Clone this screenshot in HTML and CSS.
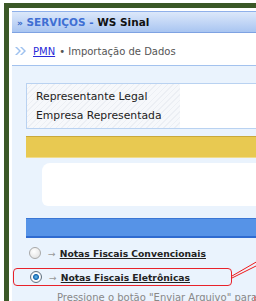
FILE: index.html
```html
<!DOCTYPE html>
<html lang="pt">
<head>
	<meta charset="UTF-8">
	<title>Serviços - WS Sinal</title>
	<link rel="stylesheet" href="styles.css">
</head>
<body>
	<div class="frame">
		<div class="title"><span class="raquo">&raquo;</span> <span class="blue">SERVIÇOS -</span> WS Sinal</div>
		<div class="crumbs">
			<svg class="dbl" width="11" height="8" viewBox="0 0 11 8"><path d="M0 0 L4 4 L0 8 L2 8 L6 4 L2 0 Z M5 0 L9 4 L5 8 L7 8 L11 4 L7 0 Z" fill="#9ec1ef"/></svg>
			<a href="#">PMN</a>
			<span class="here">&bull; Importação de Dados</span>
		</div>
		<div class="main">
			<div class="info">
				<div class="labels">
					<p>Representante Legal</p>
					<p>Empresa Representada</p>
				</div>
				<div class="values"></div>
			</div>
			<div class="bar yellow"></div>
			<div class="blob"></div>
			<div class="bar blue-bar"></div>
			<div class="opt">
				<span class="radio"></span><span class="arr">&rarr;</span><a href="#">Notas Fiscais Convencionais</a>
			</div>
			<div class="opt picked">
				<span class="radio on"></span><span class="arr">&rarr;</span><a href="#">Notas Fiscais Eletrônicas</a>
			</div>
			<p class="hint">Pressione o botão "Enviar Arquivo" para</p>
		</div>
	</div>
	<svg class="callout" width="256" height="301" viewBox="0 0 256 301">
		<path d="M232 276 L258 261 M232 278 L258 265" stroke="#f01818" stroke-width="1" fill="none"/>
		<path d="M254.5 296 L254.5 301" stroke="#f07070" stroke-width="1"/>
	</svg>
</body>
</html>
```
FILE: styles.css
```css
*{
	margin: 0;
	padding: 0;
}
html,body{
	height: 100%;
}
body{
	background: #fff;
	overflow: hidden;
	font-family: "DejaVu Sans", Verdana, sans-serif;
	font-size: 10px;
	color: #222;
}
.frame{
	margin: 3px 0 0 4px;
	border-top: 5px solid #3b5827;
	border-left: 5px solid #3b5827;
	padding: 3px 0 0 3px;
	height: 290px;
	overflow: hidden;
}
.title{
	height: 20px;
	line-height: 20px;
	border-top: 1px solid #8fb0ea;
	border-bottom: 1px solid #7ea2e2;
	background: linear-gradient(#dce8fa, #a9c5f1);
	padding-left: 5px;
	font-weight: bold;
	font-size: 10.5px;
	color: #111;
}
.title .raquo{
	color: #3566c8;
	font-size: 9px;
}
.title .blue{
	color: #3f6fd3;
}
.crumbs{
	height: 32px;
	display: flex;
	align-items: center;
	padding: 4px 0 0 3px;
	box-sizing: border-box;
	color: #555;
}
.crumbs .dbl{
	margin-right: 7px;
}
.crumbs a{
	color: #2a2ad8;
	margin-right: 4px;
}
.main{
	border-top: 1px solid #a3c2ee;
	background: #eaf3fd;
	padding: 17px 0 0 14px;
	height: 300px;
}
.info{
	display: flex;
	border: 1px solid #b9d2f1;
	border-right: 0;
	height: 44px;
	background: #fff;
}
.labels{
	width: 144px;
	padding: 3px 0 0 9px;
	font-size: 10.8px;
	background: repeating-linear-gradient(135deg, #f6f8fb 0, #f6f8fb 3px, #eceff4 3px, #eceff4 4px);
}
.labels p{
	line-height: 19px;
	color: #222;
	white-space: nowrap;
}
.values{
	flex: 1;
}
.bar{
	height: 20px;
	margin-top: 7px;
}
.yellow{
	background: #e8c951;
	border-top: 1px solid #c9a93c;
	border-bottom: 1px solid #f1dc8c;
}
.blob{
	height: 43px;
	margin: 5px 0 0 16px;
	background: #fff;
	border-radius: 8px 0 0 6px;
}
.blue-bar{
	margin-top: 12px;
	background: #5693e7;
	border-top: 1px solid #3a76d4;
	border-bottom: 2px solid #2f6bd0;
	height: 17px;
}
.opt{
	display: flex;
	align-items: center;
	height: 18px;
	margin-top: 6px;
	padding-left: 3px;
	font-weight: bold;
	font-size: 9.2px;
}
.opt a{
	color: #222;
}
.opt.picked{
	margin: 6px 0 0 -13px;
	padding-left: 16px;
	width: 201px;
	border: 1px solid #e8222a;
	border-radius: 4px;
	height: 16px;
}
.radio{
	width: 10px;
	height: 10px;
	border-radius: 50%;
	border: 1px solid #a8a8a8;
	background: radial-gradient(circle at 40% 35%, #fff, #dcdcdc);
	margin-right: 7px;
}
.radio.on{
	border-color: #607080;
	background: radial-gradient(circle at 50% 50%, #6fc0f0 0, #1466b0 2.5px, #ffffff 3.5px, #d8dde2 100%);
}
.arr{
	color: #999;
	font-weight: normal;
	margin-right: 4px;
}
.hint{
	margin: 6px 0 0 31px;
	color: #888;
	font-size: 10px;
	white-space: nowrap;
}
.callout{
	position: absolute;
	left: 0;
	top: 0;
}
```
